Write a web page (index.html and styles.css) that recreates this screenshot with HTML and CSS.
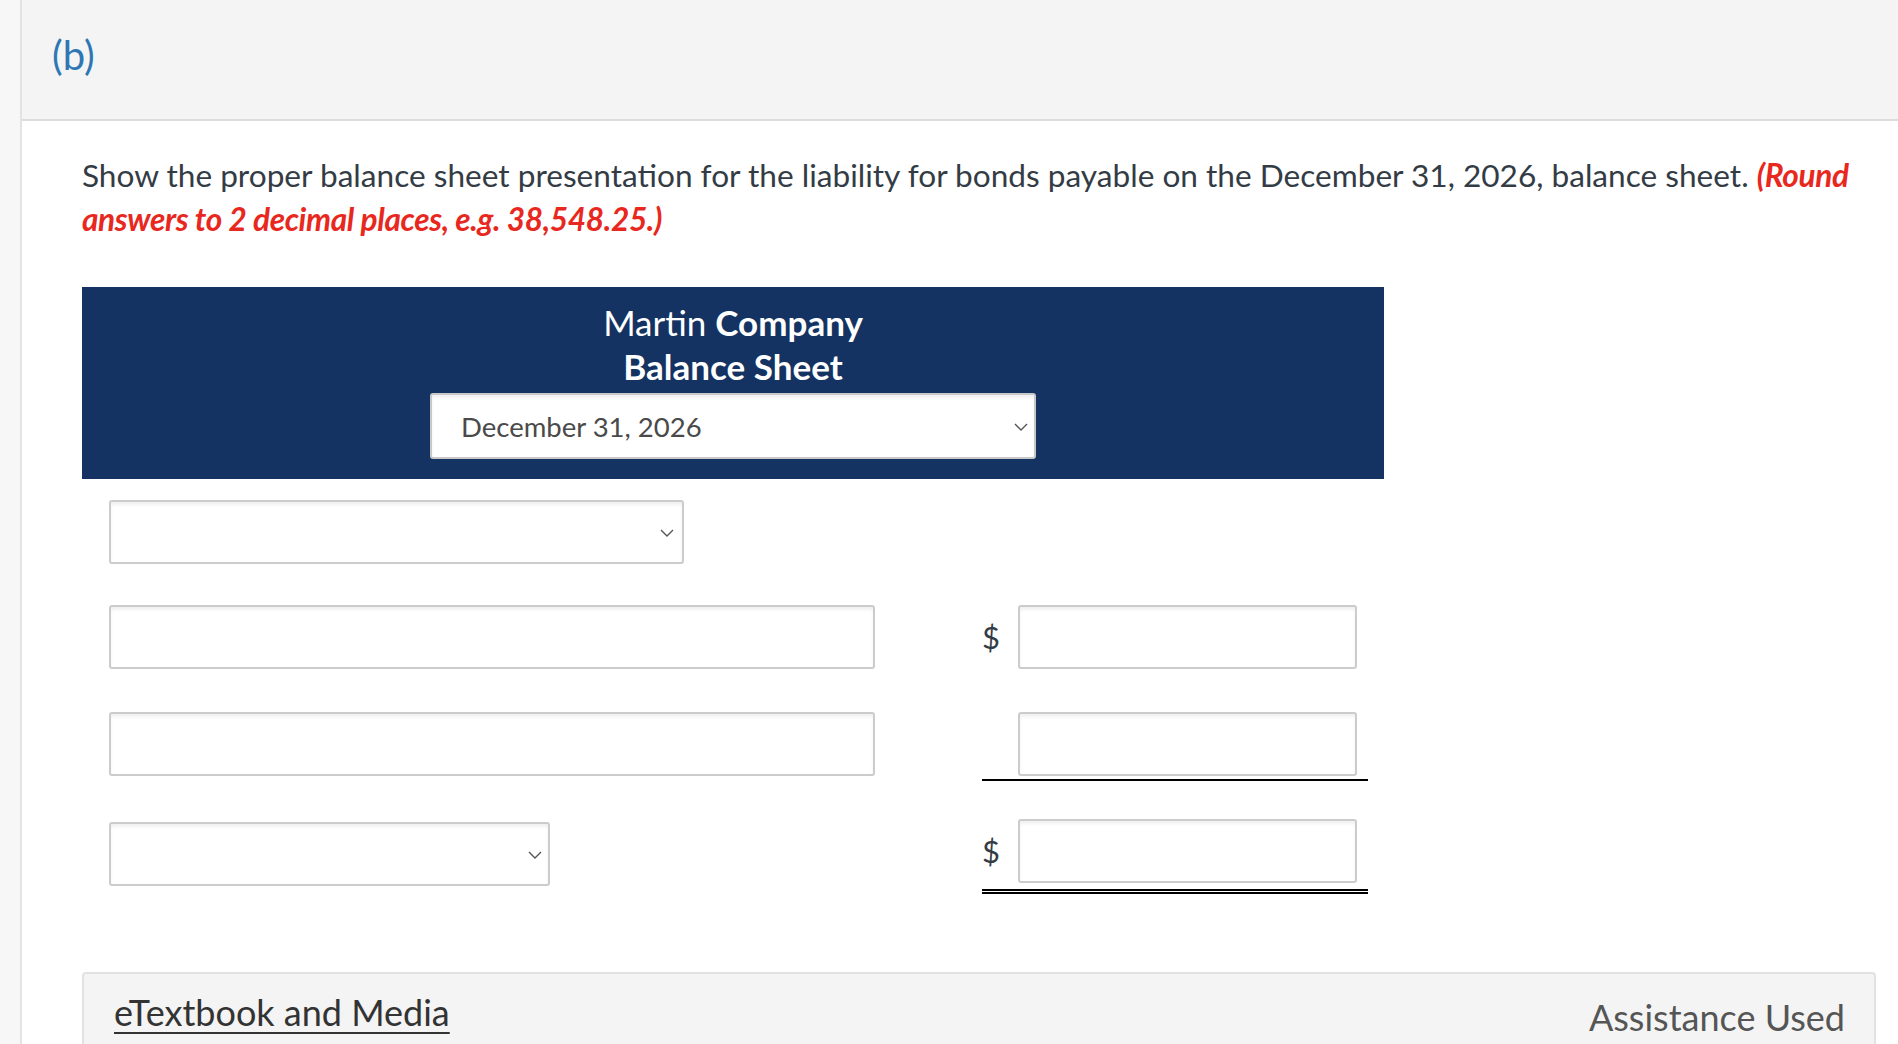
FILE: index.html
```html
<!DOCTYPE html>
<html>
<head>
<meta charset="utf-8">
<link rel="stylesheet" href="styles.css">
</head>
<body>
<div class="page">
  <div class="rail"></div>
  <div class="main">
    <div class="part-head"><span class="part-label">(b)</span></div>
    <div class="content">
      <p class="question">Show the proper balance sheet presentation for the liability for bonds payable on the December 31, 2026, balance sheet. <em class="hint">(Round answers to 2 decimal places, e.g. 38,548.25.)</em></p>

      <div class="sheet">
        <div class="sheet-head">
          <div class="title-line">Martin <strong>Company</strong></div>
          <div class="title-line"><strong>Balance Sheet</strong></div>
          <div class="select date-select">
            <span class="select-text">December 31, 2026</span>
            <svg class="chev" viewBox="0 0 14 8" width="14" height="8"><path d="M1 1 L7 7 L13 1" fill="none" stroke="#555" stroke-width="1.4"/></svg>
          </div>
        </div>

        <div class="rows">
          <div class="row row-1">
            <div class="label-cell">
              <div class="select sel-1">
                <svg class="chev" viewBox="0 0 14 8" width="14" height="8"><path d="M1 1 L7 7 L13 1" fill="none" stroke="#555" stroke-width="1.4"/></svg>
              </div>
            </div>
            <div class="amt-cell empty"></div>
          </div>

          <div class="row row-2">
            <div class="label-cell"><div class="input wide"></div></div>
            <div class="amt-cell"><span class="dollar">$</span><div class="input amt"></div></div>
          </div>

          <div class="row row-3">
            <div class="label-cell"><div class="input wide"></div></div>
            <div class="amt-cell single"><span class="dollar"></span><div class="input amt"></div></div>
          </div>

          <div class="row row-4">
            <div class="label-cell">
              <div class="select sel-2">
                <svg class="chev" viewBox="0 0 14 8" width="14" height="8"><path d="M1 1 L7 7 L13 1" fill="none" stroke="#555" stroke-width="1.4"/></svg>
              </div>
            </div>
            <div class="amt-cell double"><span class="dollar">$</span><div class="input amt"></div></div>
          </div>
        </div>
      </div>

      <div class="footer-panel">
        <a class="etext" href="#">eTextbook and Media</a>
        <span class="assist">Assistance Used</span>
      </div>
    </div>
  </div>
</div>
</body>
</html>
```

FILE: styles.css
```css
html, body {
  margin: 0;
  padding: 0;
  background: #ffffff;
  font-family: Lato, "Open Sans", "Liberation Sans", sans-serif;
  color: #333c45;
}

.page {
  display: flex;
  min-height: 1044px;
}

.rail {
  width: 20px;
  flex: 0 0 20px;
  background: #f7f7f7;
  border-right: 2px solid #e3e3e3;
}

.main {
  flex: 1;
  min-width: 0;
}

.part-head {
  height: 119px;
  background: #f4f4f4;
  border-bottom: 2px solid #dcdcdc;
  display: flex;
  align-items: center;
  padding-left: 30px;
  box-sizing: content-box;
}

.part-label {
  color: #2f77b4;
  font-size: 40px;
  margin-top: -10px;
}

.content {
  padding: 32px 22px 0 60px;
}

.question {
  margin: 0;
  font-size: 31.6px;
  line-height: 44px;
  letter-spacing: 0;
}

.hint {
  color: #e8281e;
  font-weight: 700;
  font-style: italic;
  letter-spacing: -0.35px;
}

.sheet {
  width: 1302px;
  margin-top: 46px;
}

.sheet-head {
  background: #143362;
  color: #ffffff;
  display: flex;
  flex-direction: column;
  align-items: center;
  padding: 13px 0 20px;
}

.title-line {
  font-size: 35px;
  line-height: 44px;
}

.title-line strong {
  font-weight: 700;
}

.select, .input {
  box-sizing: border-box;
  height: 64px;
  background: #ffffff;
  border: 2px solid #cccccc;
  border-radius: 3px;
  box-shadow: inset 0 3px 3px rgba(0,0,0,0.06);
}

.select {
  display: flex;
  align-items: center;
  position: relative;
}

.chev {
  position: absolute;
  right: 8px;
  top: 50%;
  margin-top: -3px;
}

.date-select {
  width: 606px;
  height: 66px;
  margin-top: 5px;
  padding-left: 29px;
  border-color: #c8c8c8;
}

.date-select .chev {
  right: 6px;
}

.select-text {
  font-size: 27.5px;
  color: #4a4a4a;
}

.rows {
  padding: 21px 16px 0 27px;
  display: flex;
  flex-direction: column;
}

.row {
  display: flex;
  justify-content: space-between;
  align-items: flex-start;
  height: 64px;
}

.row-2 { margin-top: 41px; }
.row-3 { margin-top: 43px; }
.row-4 { margin-top: 46px; }

.label-cell {
  width: 766px;
}

.sel-1 { width: 575px; }
.sel-2 { width: 441px; }
.sel-2 .chev { right: 6px; }
.wide { width: 766px; }

.amt-cell {
  width: 386px;
  display: flex;
  align-items: center;
  box-sizing: border-box;
  padding-right: 11px;
  flex: 0 0 auto;
}

.amt-cell.single {
  border-bottom: 2px solid #000000;
  padding-bottom: 3px;
}

.amt-cell.double {
  border-bottom: 5px double #000000;
  padding-bottom: 6px;
  margin-top: -3px;
}

.dollar {
  width: 36px;
  text-align: left;
  font-size: 31px;
  color: #333c45;
  padding-left: 0;
}

.amt {
  width: 339px;
}

.footer-panel {
  margin-top: 86px;
  height: 90px;
  background: #f4f4f4;
  border: 2px solid #e2e2e2;
  border-bottom: none;
  border-radius: 4px 4px 0 0;
  display: flex;
  justify-content: space-between;
  align-items: center;
  padding: 0 29px 0 30px;
  box-sizing: border-box;
}

.etext {
  font-size: 36px;
  color: #333333;
  text-decoration: underline;
  text-underline-offset: 6px;
  text-decoration-thickness: 2px;
  margin-top: -12px;
}

.assist {
  font-size: 36px;
  color: #555555;
  margin-top: -2px;
}
```
